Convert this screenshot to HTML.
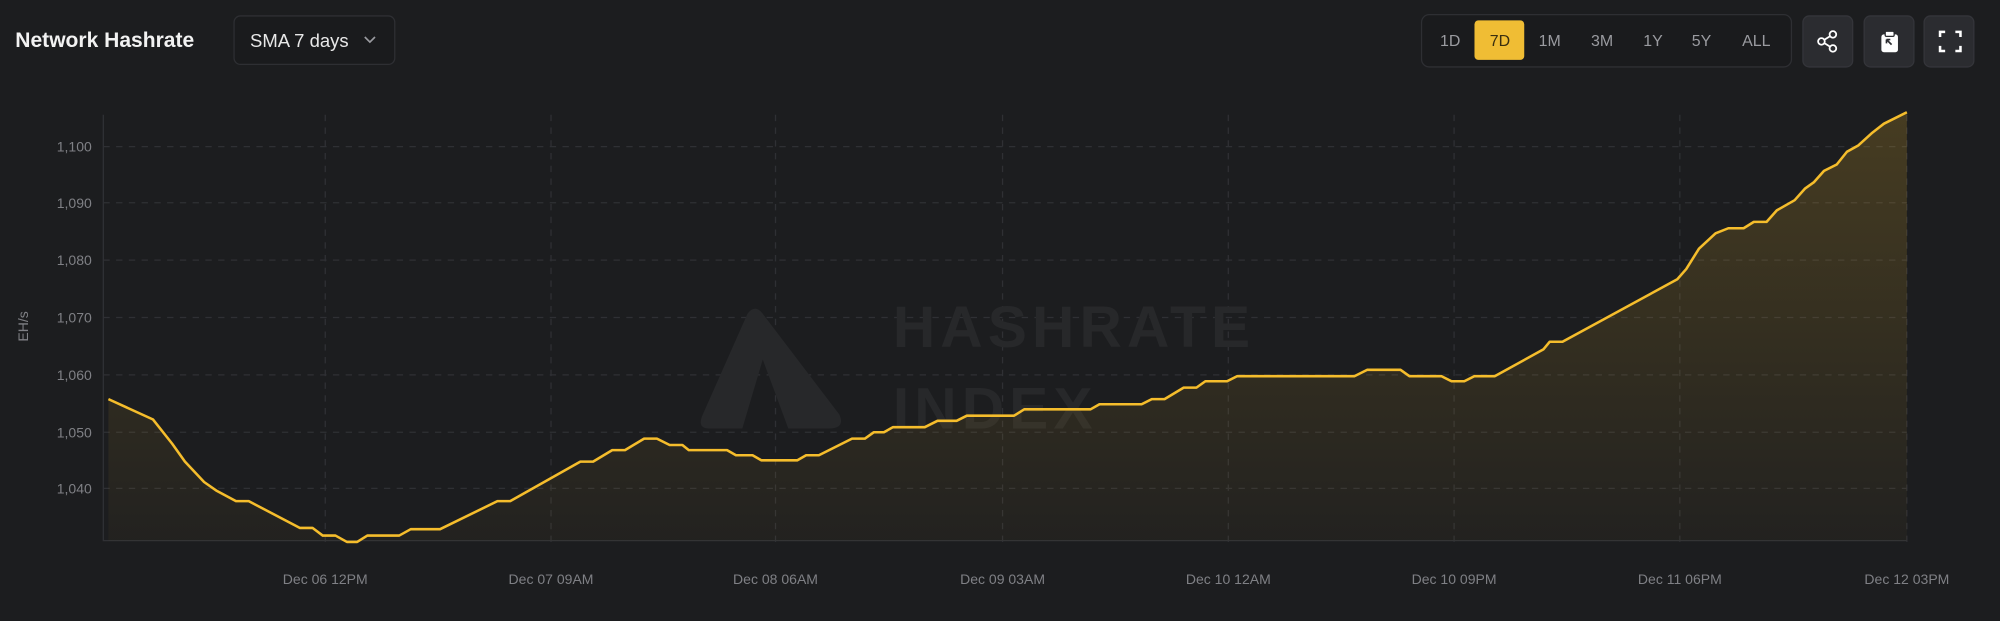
<!DOCTYPE html>
<html><head><meta charset="utf-8"><style>
html,body{margin:0;padding:0;background:#1c1d1f;overflow:hidden}
svg{display:block}
text{font-family:"Liberation Sans",sans-serif}
</style></head><body>
<svg width="2000" height="621" viewBox="0 0 1568 487" preserveAspectRatio="none">
<defs><linearGradient id="g" x1="0" y1="0" x2="0" y2="1"><stop offset="0" stop-color="#f0b92b" stop-opacity="0.2"/><stop offset="1" stop-color="#f0b92b" stop-opacity="0.03"/></linearGradient></defs>
<rect width="1568" height="487" fill="#1c1d1f"/>
<text x="12" y="37" font-size="16.5" font-weight="bold" fill="#f2f2f2">Network Hashrate</text>
<rect x="183.5" y="12.5" width="126" height="38" rx="5" fill="#1a1b1d" stroke="#2e2f33"/>
<text x="196" y="37" font-size="14.5" fill="#e8e8e8">SMA 7 days</text>
<path d="M286 29l4 4 4-4" stroke="#9a9ba0" stroke-width="1.3" fill="none"/>
<rect x="1114.5" y="11.5" width="290" height="41" rx="6" fill="#1a1b1d" stroke="#2e2f33"/>
<rect x="1156" y="16" width="39" height="31" rx="3" fill="#f0bd34"/>
<g font-size="12.5" fill="#9a9ba0" text-anchor="middle">
<text x="1137" y="36">1D</text><text x="1176" y="36" fill="#3a2f10">7D</text><text x="1215" y="36">1M</text><text x="1256" y="36">3M</text><text x="1296" y="36">1Y</text><text x="1334" y="36">5Y</text><text x="1377" y="36">ALL</text></g>
<rect x="1413.5" y="12.5" width="39" height="40" rx="5" fill="#2b2c30" stroke="#34353a"/>
<rect x="1461.5" y="12.5" width="39" height="40" rx="5" fill="#2b2c30" stroke="#34353a"/>
<rect x="1508.5" y="12.5" width="39" height="40" rx="5" fill="#2b2c30" stroke="#34353a"/>
<g stroke="#fff" stroke-width="1.4" fill="none"><circle cx="1437" cy="27" r="2.6"/><circle cx="1428" cy="32.5" r="2.6"/><circle cx="1437" cy="38" r="2.6"/><path d="M1430.3 31.2l4.4-2.8M1430.3 33.8l4.4 2.8"/></g>
<rect x="1475" y="27" width="13" height="14" rx="2" fill="#fff"/><rect x="1478" y="24.5" width="7" height="4" rx="1" fill="#fff" stroke="#2b2c30"/>
<path d="M1479 31l4 4M1479 31h3M1479 31v3" stroke="#2b2c30" stroke-width="1.3" fill="none"/>
<path d="M1521 29v-4h4M1533 25h4v4M1537 36v4h-4M1525 40h-4v-4" stroke="#fff" stroke-width="2" fill="none"/>
<g stroke="#2f3034" stroke-dasharray="5 5" stroke-width="1">
<path d="M81 115H1495M81 159H1495M81 204H1495M81 249H1495M81 294H1495M81 339H1495M81 383H1495"/>
<path d="M255 90V430M432 90V430M608 90V430M786 90V430M963 90V430M1140 90V430M1317 90V430M1495 90V430"/></g>
<path d="M81 90V424H1495" stroke="#303135" fill="none"/>
<g font-size="11" fill="#7f8085" text-anchor="end">
<text x="72" y="119">1,100</text><text x="72" y="163">1,090</text><text x="72" y="208">1,080</text><text x="72" y="253">1,070</text><text x="72" y="298">1,060</text><text x="72" y="343">1,050</text><text x="72" y="387">1,040</text></g>
<text transform="translate(22,256) rotate(-90)" font-size="11" fill="#7f8085" text-anchor="middle">EH/s</text>
<g font-size="11" fill="#7f8085" text-anchor="middle">
<text x="255" y="458">Dec 06 12PM</text><text x="432" y="458">Dec 07 09AM</text><text x="608" y="458">Dec 08 06AM</text><text x="786" y="458">Dec 09 03AM</text><text x="963" y="458">Dec 10 12AM</text><text x="1140" y="458">Dec 10 09PM</text><text x="1317" y="458">Dec 11 06PM</text><text x="1495" y="458">Dec 12 03PM</text></g>
<g fill="#27282a"><path d="M586 246Q592 238 598 246L658 325Q663 336 650 336H618L598 282L582 336H556Q546 336 551 325Z"/></g>
<text x="700" y="272" font-size="46" font-weight="bold" fill="#27282a" letter-spacing="4">HASHRATE</text>
<text x="700" y="336" font-size="46" font-weight="bold" fill="#27282a" letter-spacing="4">INDEX</text>
<path d="M85 313L120 329L135 348L145 362L160 378L170 385L185 393L195 393L235 414L245 414L253 420L263 420L272 425L280 425L288 420L313 420L322 415L345 415L390 393L400 393L455 362L465 362L480 353L490 353L505 344L515 344L525 349L535 349L540 353L570 353L577 357L590 357L597 361L625 361L632 357L642 357L668 344L678 344L685 339L693 339L700 335L725 335L735 330L750 330L758 326L795 326L803 321L855 321L862 317L895 317L903 313L913 313L928 304L938 304L945 299L962 299L970 295L1062 295L1072 290L1098 290L1105 295L1130 295L1138 299L1148 299L1156 295L1172 295L1210 274L1215 268L1225 268L1315 219L1322 211L1332 195L1345 183L1355 179L1367 179L1375 174L1385 174L1393 165L1407 157L1415 148L1422 143L1430 134L1440 129L1448 119L1457 114L1468 104L1477 97L1495 88V424H85Z" fill="url(#g)"/>
<path d="M85 313L120 329L135 348L145 362L160 378L170 385L185 393L195 393L235 414L245 414L253 420L263 420L272 425L280 425L288 420L313 420L322 415L345 415L390 393L400 393L455 362L465 362L480 353L490 353L505 344L515 344L525 349L535 349L540 353L570 353L577 357L590 357L597 361L625 361L632 357L642 357L668 344L678 344L685 339L693 339L700 335L725 335L735 330L750 330L758 326L795 326L803 321L855 321L862 317L895 317L903 313L913 313L928 304L938 304L945 299L962 299L970 295L1062 295L1072 290L1098 290L1105 295L1130 295L1138 299L1148 299L1156 295L1172 295L1210 274L1215 268L1225 268L1315 219L1322 211L1332 195L1345 183L1355 179L1367 179L1375 174L1385 174L1393 165L1407 157L1415 148L1422 143L1430 134L1440 129L1448 119L1457 114L1468 104L1477 97L1495 88" fill="none" stroke="#f5bd2c" stroke-width="2" stroke-linejoin="round"/>
</svg>
</body></html>
